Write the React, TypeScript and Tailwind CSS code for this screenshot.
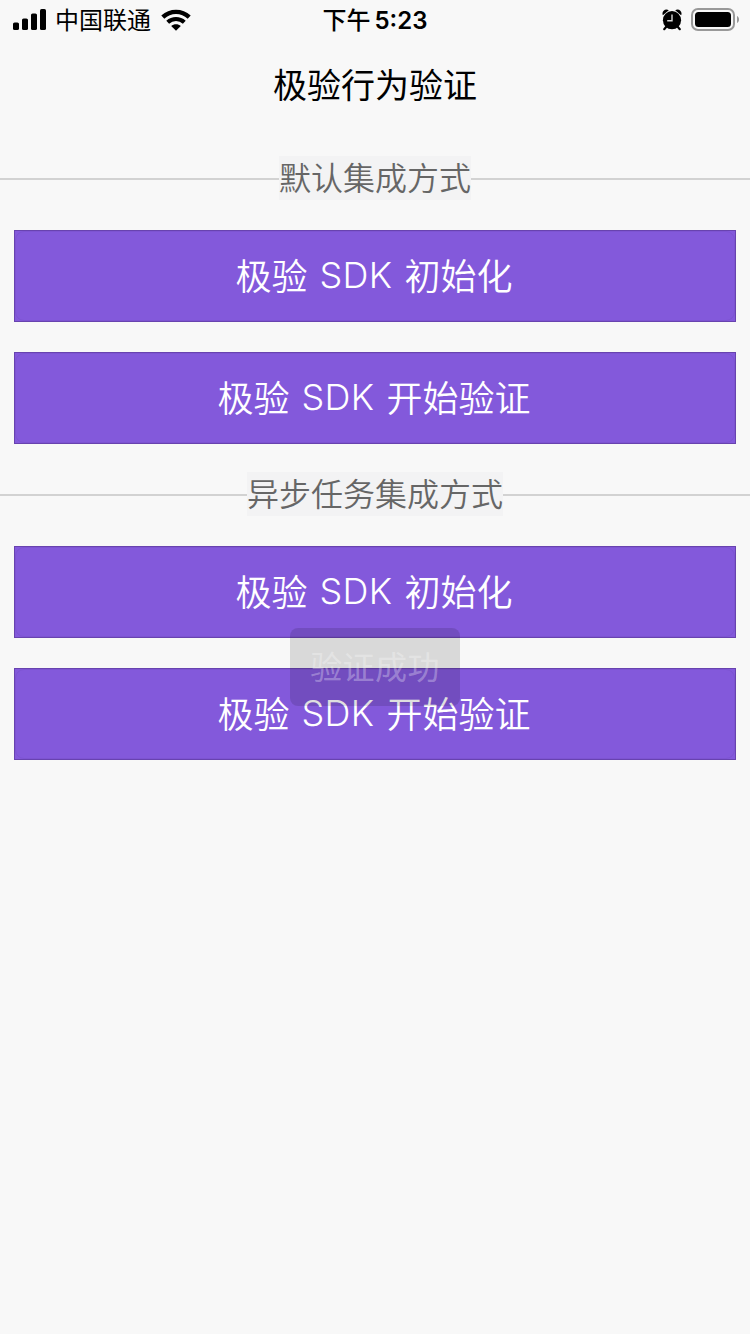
interface DemoGroup {
  title: string;
  actions: string[];
}

const groups: DemoGroup[] = [
  { title: '默认集成方式', actions: ['初始化', '开始验证'] },
  { title: '异步任务集成方式', actions: ['初始化', '开始验证'] },
];

const SignalIcon = () => (
  <svg width="34" height="22" viewBox="0 0 34 22" className="shrink-0">
    <rect x="0" y="13.5" width="6" height="7.5" rx="1.6" />
    <rect x="9" y="9.5" width="6" height="11.5" rx="1.6" />
    <rect x="18" y="4.5" width="6" height="16.5" rx="1.6" />
    <rect x="27" y="0" width="6" height="21" rx="1.6" />
  </svg>
);

const WifiIcon = () => (
  <svg width="30" height="22" viewBox="0 0 30 22" className="shrink-0">
    <path d="M1.8 8.2C9.4 1.1 20.6 1.1 28.2 8.2" fill="none" stroke="#000" strokeWidth="4.4" />
    <path d="M6.7 13.2C11.5 8.9 18.5 8.9 23.3 13.2" fill="none" stroke="#000" strokeWidth="4.2" />
    <path d="M10.2 17.1C12.9 14.6 17.1 14.6 19.8 17.1L15 21.7Z" />
  </svg>
);

const AlarmIcon = () => (
  <svg width="20" height="22" viewBox="0 0 20 22" className="shrink-0">
    <path d="M.9 6.2C-.9 2.6 3.2-1 6.8 1.2ZM19.1 6.2C20.9 2.6 16.8-1 13.2 1.2Z" />
    <path d="M4.5 17.5 2.2 20.2M15.5 17.5 17.8 20.2" stroke="#000" strokeWidth="2.2" strokeLinecap="round" />
    <circle cx="10" cy="11.2" r="9.1" />
    <path d="M10 5.4V11.8H5.2" fill="none" stroke="#d8d8d8" strokeWidth="1.4" />
  </svg>
);

const BatteryIcon = () => (
  <svg width="48" height="24" viewBox="0 0 48 24" className="shrink-0">
    <rect x="1" y="1" width="42" height="21" rx="6" fill="none" stroke="#999" strokeWidth="2" />
    <rect x="4" y="4" width="36" height="15" rx="3.5" />
    <path d="M46 8C48.7 9 48.7 14 46 15Z" fill="#999" />
  </svg>
);

const StatusBar = () => (
  <div className="grid h-10 grid-cols-3 items-center pl-[13px] pr-[11px] text-2xl">
    <div className="flex items-center">
      <SignalIcon />
      <span className="ml-2 whitespace-nowrap pt-0.5">中国联通</span>
      <span className="ml-2.5">
        <WifiIcon />
      </span>
    </div>
    <div className="flex items-center justify-center gap-1 whitespace-nowrap pr-0.5 pt-0.5 font-medium">
      <span>下午</span>
      <span className="font-['Inter'] font-semibold">5:23</span>
    </div>
    <div className="flex items-center justify-end gap-[9px]">
      <AlarmIcon />
      <BatteryIcon />
    </div>
  </div>
);

const SectionTitle = ({ title }: { title: string }) => (
  <div className="flex h-11 items-center">
    <div className="mt-0.5 h-0.5 flex-1 bg-[#d2d2d2]" />
    <h2 className="h-11 bg-[#f3f3f4] text-[32px] font-[350] leading-[46px] text-[#666]">{title}</h2>
    <div className="mt-0.5 h-0.5 flex-1 bg-[#d2d2d2]" />
  </div>
);

const ActionButton = ({ action }: { action: string }) => (
  <button type="button" className="block h-[92px] w-full border border-[#6843af] bg-[#8359db]">
    <span className="flex h-full w-full items-center justify-center gap-3 rounded-[9px] border border-[#7d54d2] pr-0.5 text-[36px] font-[350] text-white">
      <span className="pt-0.5">极验</span>
      <span className="pb-0.5 font-light tracking-[0.4px]">SDK</span>
      <span className="pt-0.5">{action}</span>
    </span>
  </button>
);

const App = () => {
  return (
    <div className="relative min-h-[1334px] w-[750px] bg-[#f8f8f8] font-['Inter','Noto_Sans_CJK_SC',sans-serif] text-black">
      <StatusBar />
      <header className="flex h-[88px] items-center justify-center pt-0.5">
        <h1 className="text-[34px]">极验行为验证</h1>
      </header>

      <main className="flex flex-col gap-7 pt-7">
        {groups.map((group) => (
          <section key={group.title}>
            <SectionTitle title={group.title} />
            <div className="mt-[30px] flex flex-col gap-[30px] px-3.5">
              {group.actions.map((action) => (
                <ActionButton key={action} action={action} />
              ))}
            </div>
          </section>
        ))}
      </main>

      {/* toast, half faded out */}
      <div className="absolute left-[290px] top-[628px] flex h-[78px] w-[170px] items-center justify-center rounded-[8px] bg-black/[0.125] pt-0.5 text-[32px] tracking-[0.4px] text-white/30">
        验证成功
      </div>
    </div>
  );
};

export default App;
